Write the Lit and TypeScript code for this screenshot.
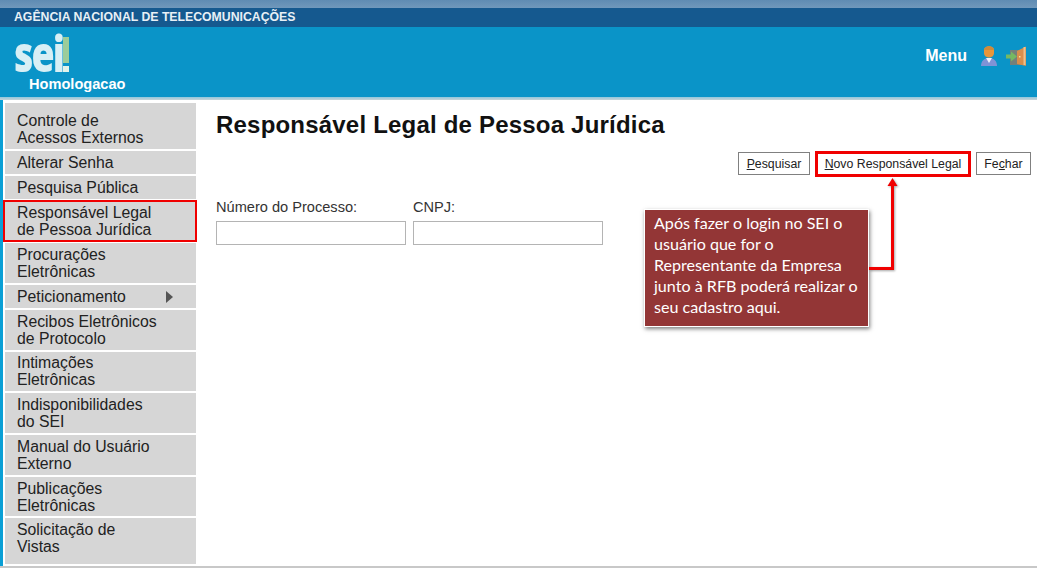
import { LitElement, html, css } from "lit";
import { customElement } from "lit/decorators.js";

const MENU: { lines: string[]; h: number; pad: number; active?: boolean; arrow?: boolean }[] = [
  { lines: ["Controle de", "Acessos Externos"], h: 46, pad: 9 },
  { lines: ["Alterar Senha"], h: 23, pad: 3 },
  { lines: ["Pesquisa Pública"], h: 23, pad: 3 },
  { lines: ["Responsável Legal", "de Pessoa Jurídica"], h: 40, pad: 3, active: true },
  { lines: ["Procurações", "Eletrônicas"], h: 40, pad: 3 },
  { lines: ["Peticionamento"], h: 23, pad: 3, arrow: true },
  { lines: ["Recibos Eletrônicos", "de Protocolo"], h: 40, pad: 3 },
  { lines: ["Intimações", "Eletrônicas"], h: 39, pad: 2 },
  { lines: ["Indisponibilidades", "do SEI"], h: 40, pad: 3 },
  { lines: ["Manual do Usuário", "Externo"], h: 40, pad: 3 },
  { lines: ["Publicações", "Eletrônicas"], h: 39, pad: 3 },
  { lines: ["Solicitação de", "Vistas"], h: 46, pad: 3 },
];

@customElement("app-root")
export class AppRoot extends LitElement {
  static styles = css`
    :host {
      display: block;
      position: relative;
      width: 1037px;
      height: 568px;
      overflow: hidden;
      background: #fff;
      font-family: "Liberation Sans", Arial, sans-serif;
      color: #1c1c1c;
    }
    .top { height: 8px; background: linear-gradient(#5f8cb3, #7098bb); }
    .agency {
      height: 19px;
      box-sizing: border-box;
      padding-left: 14px;
      background: #15598f;
      color: #e8f0f6;
      font-size: 12.28px;
      font-weight: bold;
      line-height: 19px;
    }
    .band {
      height: 70px;
      background: #0a94c8;
      display: flex;
      justify-content: space-between;
      color: #fff;
    }
    .brand { padding-left: 14px; width: 140px; }
    .logo {
      display: flex;
      align-items: flex-start;
      height: 47px;
    }
    .logo-text {
      display: block;
      width: 47px;
      height: 40px;
      margin-top: 6px;
      font-family: "Open Sans", sans-serif;
      font-weight: 800;
      font-size: 50px;
      line-height: 40px;
      letter-spacing: -2.5px;
      color: #d8eff5;
      transform: scaleX(0.75);
      transform-origin: left center;
    }
    .bang { width: 6px; height: 35px; margin: 10px 0 0 2px; display: flex; flex-direction: column; justify-content: space-between; flex: none; }
    .bang i { display: block; background: #9ccc9a; width: 6px; height: 26px; }
    .bang b { display: block; background: #e2f3ea; width: 6px; height: 6px; }
    .env { font-size: 14.6px; font-weight: bold; padding-left: 15px; line-height: 16px; margin-top: 2px; }
    .actions { display: flex; align-items: center; padding: 0 10px 12px 0; }
    .menu-label { font-size: 16px; font-weight: bold; margin-right: 14px; }
    .actions svg { display: block; }
    .actions svg + svg { margin-left: 9px; }
    .edge { height: 3px; background: linear-gradient(#8fc7dc, #c9d4d8); }

    .content { display: flex; height: 466px; border-bottom: 2px solid #c8c8c8; }
    .stripe { width: 3px; background: #0a9fd5; flex: none; }
    .side { width: 191px; margin-left: 2px; padding-top: 3px; flex: none; display: flex; flex-direction: column; gap: 2px; box-sizing: border-box; }
    .item {
      position: relative;
      display: block;
      background: #d6d6d6;
      box-sizing: border-box;
      padding-left: 12px;
      font-size: 15.8px;
      line-height: 17px;
      color: #222;
    }
    .item.active::after {
      content: "";
      position: absolute;
      left: -2px;
      right: -1px;
      top: -1px;
      bottom: -1px;
      border: 2px solid #f00000;
    }
    .tri {
      position: absolute;
      right: 23px;
      top: 6px;
      width: 0;
      height: 0;
      border-left: 7px solid #555;
      border-top: 6px solid transparent;
      border-bottom: 6px solid transparent;
    }
    .main { flex: 1; padding: 0 6px 0 20px; min-width: 0; }
    h1 { margin: 11px 0 0; font-size: 24px; line-height: 28px; font-weight: bold; color: #111; letter-spacing: 0.2px; }
    .buttons { display: flex; justify-content: flex-end; gap: 6px; margin-top: 13px; }
    .btn {
      position: relative;
      box-sizing: border-box;
      height: 23px;
      padding: 0;
      text-align: center;
      white-space: nowrap;
      background: #fff;
      border: 1px solid #808080;
      font-size: 12.3px;
      line-height: 20px;
      color: #222;
      font-family: inherit;
    }
    .btn.search { width: 72px; }
    .btn.hl { width: 154px; }
    .btn.close { width: 55px; }
    .btn u { text-decoration: underline; }
    .btn.hl::after {
      content: "";
      position: absolute;
      left: -2px;
      right: -2px;
      top: -2px;
      bottom: -3px;
      border: 3px solid #f00000;
    }
    .fields { display: flex; gap: 7px; margin-top: 24px; }
    .field { width: 190px; }
    .field label { display: block; font-size: 14.6px; line-height: 16px; color: #333; margin-bottom: 6px; }
    .field .input { height: 24px; box-sizing: border-box; border: 1px solid #b4b4b4; background: #fff; }

    .callout {
      position: absolute;
      left: 644px;
      top: 209px;
      width: 225px;
      height: 118px;
      box-sizing: border-box;
      background: #933636;
      border: 1px solid #fff;
      box-shadow: 1px 2px 4px rgba(0, 0, 0, 0.5);
      color: #fff;
      font-family: Lato, "Open Sans", sans-serif;
      font-size: 16.1px;
      line-height: 21px;
      padding: 2px 0 0 9px;
      white-space: nowrap;
    }
    .arrow { position: absolute; left: 868px; top: 176px; filter: drop-shadow(1px 1px 1px rgba(0,0,0,.35)); }
  `;

  private personIcon() {
    return html`<svg width="16" height="21" viewBox="0 0 16 21">
      <path d="M0 20c0-5 3-8 8-8s8 3 8 8z" fill="#7f93d6"/>
      <path d="M5 12l3 5 3-5z" fill="#eef2fa"/>
      <path d="M3 4c0-5 10-5 10 0v3c0 6-10 6-10 0z" fill="#e9963a"/>
      <path d="M3 4c1-5 9-5 10 0z" fill="#cf8a3a"/>
    </svg>`;
  }

  private doorIcon() {
    return html`<svg width="21" height="21" viewBox="0 0 21 21">
      <rect x="4" y="4" width="11" height="15" fill="#75807a"/>
      <path d="M11 5l9-4.500V20l-9-2z" fill="#d98e4c"/>
      <path d="M18.500 1v18" stroke="#eec08a" stroke-width="2"/>
      <rect x="13" y="10" width="1.500" height="1.500" fill="#f6e3a0"/>
      <path d="M0 8.500h5V5.500l6 5-6 5v-3H0z" fill="#76b862"/>
    </svg>`;
  }

  render() {
    return html`
      <div class="top"></div>
      <div class="agency">AGÊNCIA NACIONAL DE TELECOMUNICAÇÕES</div>
      <div class="band">
        <div class="brand">
          <div class="logo">
            <span class="logo-text">sei</span>
            <span class="bang"><i></i><b></b></span>
          </div>
          <div class="env">Homologacao</div>
        </div>
        <div class="actions">
          <span class="menu-label">Menu</span>
          ${this.personIcon()} ${this.doorIcon()}
        </div>
      </div>
      <div class="edge"></div>
      <div class="content">
        <div class="stripe"></div>
        <nav class="side">
          ${MENU.map(
            (m) => html`<div
              class="item ${m.active ? "active" : ""}"
              style="height:${m.h}px;padding-top:${m.pad}px"
            >
              ${m.lines.map((l) => html`<div>${l}</div>`)}
              ${m.arrow ? html`<span class="tri"></span>` : ""}
            </div>`
          )}
        </nav>
        <main class="main">
          <h1>Responsável Legal de Pessoa Jurídica</h1>
          <div class="buttons">
            <button class="btn search"><u>P</u>esquisar</button>
            <button class="btn hl"><u>N</u>ovo Responsável Legal</button>
            <button class="btn close">Fe<u>c</u>har</button>
          </div>
          <div class="fields">
            <div class="field"><label>Número do Processo:</label><div class="input"></div></div>
            <div class="field"><label>CNPJ:</label><div class="input"></div></div>
          </div>
        </main>
      </div>
      <div class="callout">
        Após fazer o login no SEI o<br />usuário que for o<br />Representante da Empresa<br />junto à RFB poderá realizar o<br />seu cadastro aqui.
      </div>
      <svg class="arrow" width="30" height="96" viewBox="0 0 30 96">
        <path d="M1 92.500H24.500V8" fill="none" stroke="#f00000" stroke-width="3"/>
        <path d="M24.500 2l-5 8h10z" fill="#f00000"/>
      </svg>
    `;
  }
}
